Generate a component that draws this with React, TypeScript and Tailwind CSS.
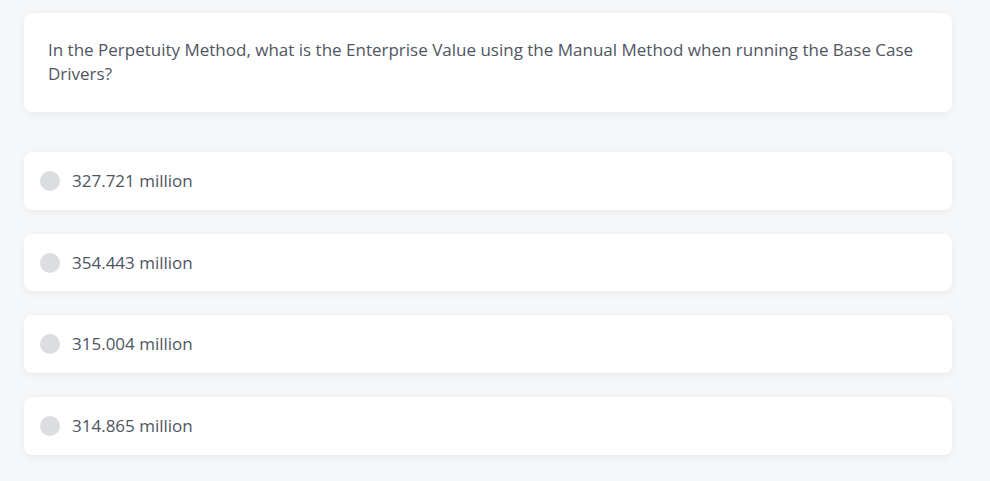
const options = ["327.721 million", "354.443 million", "315.004 million", "314.865 million"];

export default function App() {
  return (
    <div
      className="min-h-[481px] bg-[#f6f7f9] px-6 pt-[13px] pb-6 text-[17px] text-[#50555f]"
      style={{ fontFamily: '"Segoe UI", "Open Sans", sans-serif' }}
    >
      <div className="w-[928px] rounded-lg bg-white px-6 pt-[25px] pb-[26px] leading-[24px] shadow-[0_2px_8px_rgba(0,0,0,0.06)]">
        In the Perpetuity Method, what is the Enterprise Value using the Manual Method when running the Base Case Drivers?
      </div>
      <div className="mt-10 flex w-[928px] flex-col gap-6">
        {options.map((o) => (
          <div
            key={o}
            className="flex h-[57.7px] items-center gap-3 rounded-lg bg-white px-4 shadow-[0_2px_8px_rgba(0,0,0,0.06)]"
          >
            <span className="h-5 w-5 shrink-0 rounded-full bg-[#dcdde0]" />
            <span className="leading-[24px]">{o}</span>
          </div>
        ))}
      </div>
    </div>
  );
}
